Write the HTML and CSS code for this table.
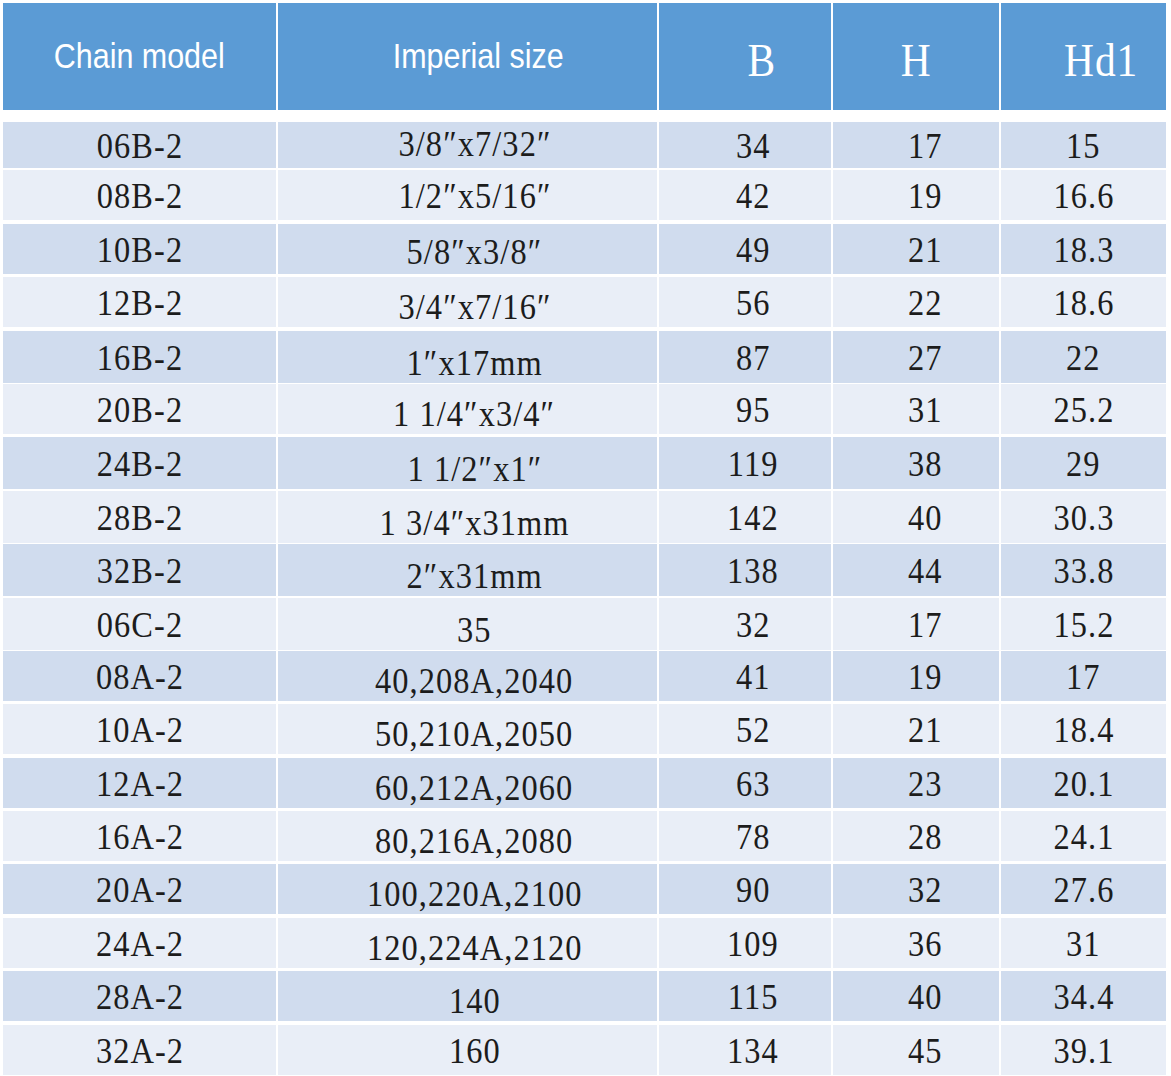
FILE: index.html
```html
<!DOCTYPE html>
<html>
<head>
<meta charset="utf-8">
<link rel="stylesheet" href="styles.css">
</head>
<body>
<div class="table">
  <div class="row head">
    <div class="cell"><span class="sans">Chain model</span></div>
    <div class="cell c2"><span class="sans">Imperial size</span></div>
    <div class="cell c3"><span class="serif big">B</span></div>
    <div class="cell"><span class="serif big">H</span></div>
    <div class="cell c5"><span class="serif big">Hd1</span></div>
  </div>
  <div class="body">
    <div class="row odd first">
      <div class="cell"><span class="serif">06B-2</span></div>
      <div class="cell c2 hi"><span class="serif">3/8″x7/32″</span></div>
      <div class="cell c3"><span class="serif">34</span></div>
      <div class="cell c4"><span class="serif">17</span></div>
      <div class="cell"><span class="serif">15</span></div>
    </div>
    <div class="row even">
      <div class="cell"><span class="serif">08B-2</span></div>
      <div class="cell c2"><span class="serif">1/2″x5/16″</span></div>
      <div class="cell c3"><span class="serif">42</span></div>
      <div class="cell c4"><span class="serif">19</span></div>
      <div class="cell"><span class="serif">16.6</span></div>
    </div>
    <div class="row odd">
      <div class="cell"><span class="serif">10B-2</span></div>
      <div class="cell c2 lo1"><span class="serif">5/8″x3/8″</span></div>
      <div class="cell c3"><span class="serif">49</span></div>
      <div class="cell c4"><span class="serif">21</span></div>
      <div class="cell"><span class="serif">18.3</span></div>
    </div>
    <div class="row even">
      <div class="cell"><span class="serif">12B-2</span></div>
      <div class="cell c2 lo2"><span class="serif">3/4″x7/16″</span></div>
      <div class="cell c3"><span class="serif">56</span></div>
      <div class="cell c4"><span class="serif">22</span></div>
      <div class="cell"><span class="serif">18.6</span></div>
    </div>
    <div class="row odd">
      <div class="cell"><span class="serif">16B-2</span></div>
      <div class="cell c2 lo3"><span class="serif">1″x17mm</span></div>
      <div class="cell c3"><span class="serif">87</span></div>
      <div class="cell c4"><span class="serif">27</span></div>
      <div class="cell"><span class="serif">22</span></div>
    </div>
    <div class="row even">
      <div class="cell"><span class="serif">20B-2</span></div>
      <div class="cell c2 lo2"><span class="serif">1 1/4″x3/4″</span></div>
      <div class="cell c3"><span class="serif">95</span></div>
      <div class="cell c4"><span class="serif">31</span></div>
      <div class="cell"><span class="serif">25.2</span></div>
    </div>
    <div class="row odd">
      <div class="cell"><span class="serif">24B-2</span></div>
      <div class="cell c2 lo3"><span class="serif">1 1/2″x1″</span></div>
      <div class="cell c3"><span class="serif">119</span></div>
      <div class="cell c4"><span class="serif">38</span></div>
      <div class="cell"><span class="serif">29</span></div>
    </div>
    <div class="row even">
      <div class="cell"><span class="serif">28B-2</span></div>
      <div class="cell c2 lo4"><span class="serif">1 3/4″x31mm</span></div>
      <div class="cell c3"><span class="serif">142</span></div>
      <div class="cell c4"><span class="serif">40</span></div>
      <div class="cell"><span class="serif">30.3</span></div>
    </div>
    <div class="row odd">
      <div class="cell"><span class="serif">32B-2</span></div>
      <div class="cell c2 lo5"><span class="serif">2″x31mm</span></div>
      <div class="cell c3"><span class="serif">138</span></div>
      <div class="cell c4"><span class="serif">44</span></div>
      <div class="cell"><span class="serif">33.8</span></div>
    </div>
    <div class="row even">
      <div class="cell"><span class="serif">06C-2</span></div>
      <div class="cell c2 lo3"><span class="serif">35</span></div>
      <div class="cell c3"><span class="serif">32</span></div>
      <div class="cell c4"><span class="serif">17</span></div>
      <div class="cell"><span class="serif">15.2</span></div>
    </div>
    <div class="row odd">
      <div class="cell"><span class="serif">08A-2</span></div>
      <div class="cell c2 lo2"><span class="serif">40,208A,2040</span></div>
      <div class="cell c3"><span class="serif">41</span></div>
      <div class="cell c4"><span class="serif">19</span></div>
      <div class="cell"><span class="serif">17</span></div>
    </div>
    <div class="row even">
      <div class="cell"><span class="serif">10A-2</span></div>
      <div class="cell c2 lo2"><span class="serif">50,210A,2050</span></div>
      <div class="cell c3"><span class="serif">52</span></div>
      <div class="cell c4"><span class="serif">21</span></div>
      <div class="cell"><span class="serif">18.4</span></div>
    </div>
    <div class="row odd">
      <div class="cell"><span class="serif">12A-2</span></div>
      <div class="cell c2 lo2"><span class="serif">60,212A,2060</span></div>
      <div class="cell c3"><span class="serif">63</span></div>
      <div class="cell c4"><span class="serif">23</span></div>
      <div class="cell"><span class="serif">20.1</span></div>
    </div>
    <div class="row even">
      <div class="cell"><span class="serif">16A-2</span></div>
      <div class="cell c2 lo2"><span class="serif">80,216A,2080</span></div>
      <div class="cell c3"><span class="serif">78</span></div>
      <div class="cell c4"><span class="serif">28</span></div>
      <div class="cell"><span class="serif">24.1</span></div>
    </div>
    <div class="row odd">
      <div class="cell"><span class="serif">20A-2</span></div>
      <div class="cell c2 lo2"><span class="serif">100,220A,2100</span></div>
      <div class="cell c3"><span class="serif">90</span></div>
      <div class="cell c4"><span class="serif">32</span></div>
      <div class="cell"><span class="serif">27.6</span></div>
    </div>
    <div class="row even">
      <div class="cell"><span class="serif">24A-2</span></div>
      <div class="cell c2 lo2"><span class="serif">120,224A,2120</span></div>
      <div class="cell c3"><span class="serif">109</span></div>
      <div class="cell c4"><span class="serif">36</span></div>
      <div class="cell"><span class="serif">31</span></div>
    </div>
    <div class="row odd">
      <div class="cell"><span class="serif">28A-2</span></div>
      <div class="cell c2 lo2"><span class="serif">140</span></div>
      <div class="cell c3"><span class="serif">115</span></div>
      <div class="cell c4"><span class="serif">40</span></div>
      <div class="cell"><span class="serif">34.4</span></div>
    </div>
    <div class="row even">
      <div class="cell"><span class="serif">32A-2</span></div>
      <div class="cell c2"><span class="serif">160</span></div>
      <div class="cell c3"><span class="serif">134</span></div>
      <div class="cell c4"><span class="serif">45</span></div>
      <div class="cell"><span class="serif">39.1</span></div>
    </div>
  </div>
</div>
</body>
</html>
```
FILE: styles.css
```css
html, body {
  margin: 0;
  padding: 0;
  background: #ffffff;
}

.table {
  padding: 3px 0 0 3px;
  width: 1163px;
}

.row {
  display: grid;
  grid-template-columns: 273px 379px 172px 166px 165px;
  column-gap: 2px;
  height: 50px;
}

.head {
  height: 107px;
  margin-bottom: 12px;
}

.head .cell {
  background: #5b9bd5;
  color: #ffffff;
}

.body {
  display: flex;
  flex-direction: column;
  gap: 3.4px;
}

.row.first {
  height: 45px;
}

.odd .cell {
  background: #d0dcee;
}

.even .cell {
  background: #e9eef7;
}

.cell {
  display: flex;
  align-items: center;
  justify-content: center;
  box-sizing: border-box;
  color: #1c1c1c;
}

.sans {
  display: inline-block;
  font-family: "Liberation Sans", Arial, sans-serif;
  font-size: 35px;
  transform: scaleX(0.87);
  white-space: nowrap;
  margin-top: -2px;
}

.serif {
  display: inline-block;
  font-family: "Liberation Serif", "DejaVu Serif", "Times New Roman", serif;
  font-size: 36px;
  letter-spacing: 1.2px;
  transform: scaleX(0.9);
  white-space: nowrap;
  padding-top: 2px;
  line-height: 40px;
}

.serif.big {
  font-size: 46px;
  letter-spacing: 1px;
  padding-top: 8px;
  line-height: 50px;
}

.head .c2 { padding-left: 22px; }
.head .c3 { padding-left: 34px; }
.head .c5 { padding-left: 36px; }

.c2 { padding-left: 14px; }
.c3 { padding-left: 16px; }
.c4 { padding-left: 18px; }

.hi { padding-bottom: 4px; }
.lo1 { padding-top: 5px; }
.lo2 { padding-top: 8px; }
.lo3 { padding-top: 10px; }
.lo4 { padding-top: 10px; }
.lo5 { padding-top: 10px; }
```
